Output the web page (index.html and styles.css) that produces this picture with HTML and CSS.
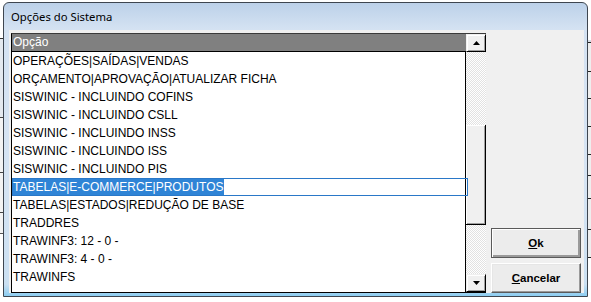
FILE: index.html
```html
<!DOCTYPE html>
<html lang="pt-BR">
<head>
  <meta charset="UTF-8">
  <title>Opções do Sistema</title>
  <link rel="stylesheet" href="styles.css">
</head>
<body>
  <div class="screen">
    <div class="behind left"></div>

    <div class="window">
      <div class="titlebar">Opções do Sistema</div>

      <div class="client">
        <!-- Lista de opções -->
        <div class="listbox">
          <div class="rows">
            <div class="head">Opção</div>
            <div class="items">
              <div class="item">OPERAÇÕES|SAÍDAS|VENDAS</div>
              <div class="item">ORÇAMENTO|APROVAÇÃO|ATUALIZAR FICHA</div>
              <div class="item">SISWINIC - INCLUINDO COFINS</div>
              <div class="item">SISWINIC - INCLUINDO CSLL</div>
              <div class="item">SISWINIC - INCLUINDO INSS</div>
              <div class="item">SISWINIC - INCLUINDO ISS</div>
              <div class="item">SISWINIC - INCLUINDO PIS</div>
              <div class="item focus"><span class="sel">TABELAS|E-COMMERCE|PRODUTOS</span></div>
              <div class="item">TABELAS|ESTADOS|REDUÇÃO DE BASE</div>
              <div class="item">TRADDRES</div>
              <div class="item">TRAWINF3: 12 - 0 -</div>
              <div class="item">TRAWINF3: 4 - 0 -</div>
              <div class="item">TRAWINFS</div>
            </div>
          </div>

          <div class="vscroll">
            <div class="sbtn up">
              <svg width="7" height="4" viewBox="0 0 7 4"><polygon points="3.5,0 7,4 0,4" fill="#000"/></svg>
            </div>
            <div class="track top"></div>
            <div class="thumb"></div>
            <div class="track bottom"></div>
            <div class="sbtn down">
              <svg width="7" height="4" viewBox="0 0 7 4"><polygon points="0,0 7,0 3.5,4" fill="#000"/></svg>
            </div>
          </div>
        </div>

        <!-- Botões -->
        <div class="actions">
          <button class="btn default"><u>O</u>k</button>
          <button class="btn"><u>C</u>ancelar</button>
        </div>
      </div>
    </div>

    <div class="behind right"></div>
  </div>
</body>
</html>
```

FILE: styles.css
```css
body {
  margin: 0;
  padding: 0;
  background: #fff;
  font-family: "Liberation Sans", Arial, sans-serif;
}

.screen {
  display: flex;
  width: 591px;
  height: 302px;
  padding-top: 2px;
  box-sizing: border-box;
  overflow: hidden;
}

.behind {
  width: 3px;
  flex: none;
  margin-top: -2px;
}

.behind.left {
  background: linear-gradient(to bottom,
    #fff 0, #fff 38px, #333 38px, #333 39px, #e4e9ef 39px, #e4e9ef 117px,
    #444 117px, #444 118px, #f3f3f3 118px, #f3f3f3 172px, #444 172px, #444 173px,
    #f3f3f3 173px, #f3f3f3 212px, #444 212px, #444 213px, #f3f3f3 213px,
    #f3f3f3 233px, #555 233px, #555 234px, #fff 234px);
}

.behind.right {
  background: linear-gradient(to bottom,
    #fff 0, #fff 40px, #d6dde6 40px, #d6dde6 42px, #222 42px, #222 43px,
    #eee 43px, #eee 71px, #222 71px, #222 72px, #eee 72px, #eee 98px,
    #222 98px, #222 99px, #eee 99px, #eee 126px, #222 126px, #222 127px,
    #eee 127px, #eee 154px, #222 154px, #222 155px, #eee 155px, #eee 175px,
    #222 175px, #222 176px, #eee 176px, #eee 198px, #222 198px, #222 199px,
    #eee 199px, #eee 229px, #222 229px, #222 230px, #eee 230px, #eee 257px,
    #222 257px, #222 258px, #fff 258px);
}

.window {
  width: 585px;
  height: 295px;
  flex: none;
  box-sizing: border-box;
  border: 1px solid #3e4650;
  border-radius: 6px 6px 0 0;
  background: linear-gradient(to bottom, #bcd1e9 0, #d4e2f2 26px, #d6e4f3 60%, #cbe0f2 96%, #8ccdf1 100%);
  display: flex;
  flex-direction: column;
  padding: 0 3px 3px 5px;
}

.titlebar {
  height: 27px;
  line-height: 28px;
  padding-left: 2px;
  font-family: "Noto Sans", sans-serif;
  font-size: 11.3px;
  color: #000;
  flex: none;
}

.client {
  height: 263px;
  flex: none;
  background: #f0f0f0;
  display: flex;
  padding: 3px 3px 0 2px;
  box-sizing: border-box;
}

.listbox {
  width: 475px;
  height: 260px;
  flex: none;
  box-sizing: border-box;
  border: 1px solid #000;
  border-top-color: #3a3a3a;
  border-right: none;
  background: #fff;
  display: flex;
}

.rows {
  width: 454px;
  display: flex;
  flex-direction: column;
}

.head {
  height: 17px;
  line-height: 17px;
  background: #808080;
  color: #fff;
  font-size: 12px;
  padding-left: 1px;
  border-bottom: 1px solid #000;
}

.items {
  flex: 1;
  border-right: 1px solid #000;
}

.item {
  height: 18px;
  line-height: 18px;
  font-size: 12px;
  color: #000;
  padding-left: 1px;
  white-space: nowrap;
  box-sizing: border-box;
}

.item.focus {
  box-shadow: inset 0 0 0 1px #2a78c8;
  padding-top: 1px;
  margin-right: -3px;
  position: relative;
}

.sel {
  display: inline-block;
  height: 16px;
  line-height: 16px;
  background: #2f84d6;
  color: #fff;
  vertical-align: top;
}

.vscroll {
  width: 20px;
  display: flex;
  flex-direction: column;
}

.sbtn {
  background: #f0f0f0;
  border: 1px solid;
  border-color: #f0f0f0 #000 #000 #f0f0f0;
  box-shadow: inset 1px 1px #fff, inset -1px -1px #a0a0a0;
  display: flex;
  align-items: center;
  justify-content: center;
  box-sizing: border-box;
}

.sbtn.up {
  height: 18px;
}

.sbtn.down {
  flex: 1;
}

.track {
  background-color: #fff;
  background-image: repeating-conic-gradient(#e2e2e2 0 25%, #fff 0 50%);
  background-size: 2px 2px;
}

.track.top {
  height: 73px;
}

.track.bottom {
  height: 49px;
}

.thumb {
  height: 100px;
  background: #f0f0f0;
  box-sizing: border-box;
  border-right: 1px solid #000;
  border-bottom: 1px solid #000;
  box-shadow: inset 1px 1px #fff, inset -1px -1px #a0a0a0;
}

.actions {
  width: 90px;
  margin-left: 5px;
  display: flex;
  flex-direction: column;
  justify-content: flex-end;
  gap: 5px;
}

.btn {
  height: 30px;
  width: 90px;
  padding: 0;
  font-family: "Liberation Sans", Arial, sans-serif;
  font-size: 11.5px;
  font-weight: bold;
  color: #000;
  background: #ececec;
  border: 1px solid;
  border-color: #fff #5a5a5a #5a5a5a #fff;
  box-shadow: inset -1px -1px #9a9a9a, inset 1px 1px #e6e6e6;
  cursor: pointer;
}

.btn.default {
  border-color: #5a5a5a;
  box-shadow: inset 1px 1px #fff, inset -2px -2px #9a9a9a;
}
```
